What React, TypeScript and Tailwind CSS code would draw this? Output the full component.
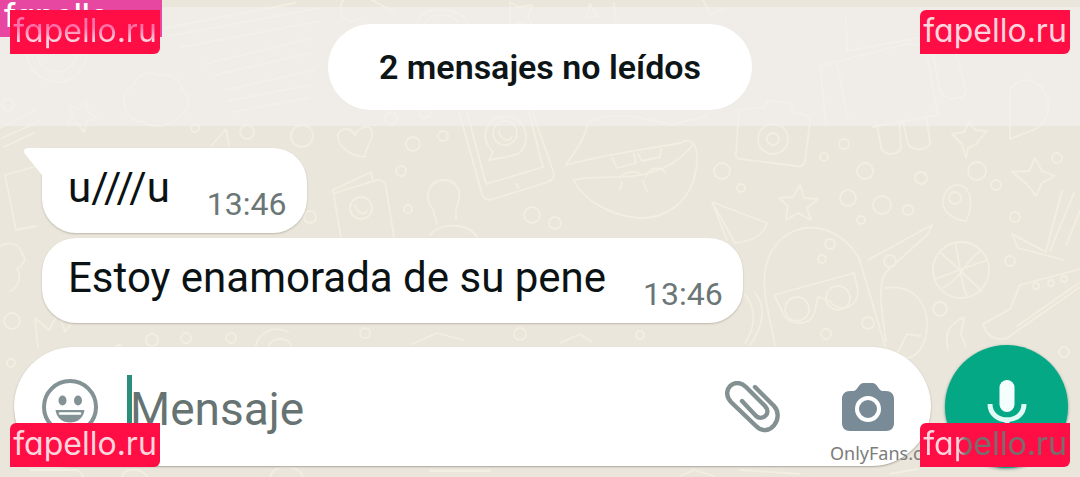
import React from "react";

function Wallpaper() {
  const dots = [
    [8, 105, 6], [247, 132, 7], [302, 136, 11], [195, 128, 4], [413, 144, 7], [443, 136, 5], [401, 171, 5],
    [408, 209, 4], [532, 215, 8], [555, 223, 6], [722, 171, 8], [741, 188, 4], [844, 144, 5], [824, 157, 4],
    [865, 171, 8], [921, 178, 6], [848, 198, 8], [882, 205, 9], [908, 210, 5], [861, 220, 4], [977, 171, 9],
    [996, 185, 5], [1057, 158, 5], [1015, 217, 5], [822, 259, 4], [830, 244, 5], [1010, 261, 5], [940, 309, 7],
    [868, 323, 6], [890, 261, 6], [1064, 352, 5], [826, 334, 5], [391, 118, 6], [425, 112, 6], [12, 321, 8],
    [119, 349, 4], [152, 340, 6], [186, 338, 5], [231, 338, 5], [365, 333, 5], [520, 334, 6], [640, 335, 4],
    [11, 363, 4], [310, 217, 6],
  ];
  return (
    <svg
      aria-hidden="true"
      className="absolute inset-0 h-full w-full"
      viewBox="0 0 1080 477"
      preserveAspectRatio="xMidYMid slice"
      fill="none"
      stroke="#f2eee1"
      strokeWidth="1.8"
      strokeLinecap="round"
      strokeLinejoin="round"
    >
      {dots.map(([x, y, r], i) => (
        <circle key={i} cx={x} cy={y} r={r} />
      ))}
      <path d="M165 28l130-25M170 36l150-28M182 47l138-26M205 64l104-25M215 75l95-22M226 90l88-20M228 101l82-16M232 112l76-14" />
      <circle cx="57" cy="52" r="30" /><circle cx="57" cy="52" r="20" />
      <path d="M124 102c-2-9 4-14 10-17 2-10 17-16 24-9 12-4 24 4 24 14 10 6 8 22-2 26-10 12-28 12-37 6-10 0-18-8-19-20zM69 105l9 4 8-9 2 12 9 5-10 4-3 11-7-9-10 1 6-9z" />
      <path d="M5 175l36-10M5 175l11 55 20-4M0 128l36-18M2 138l38-17M4 147l30-14M211 146l15-17 3 16M0 246c8-5 20-3 22 8 6 5 0 12-5 15 6 8 0 20-7 22M38 348l-3-30 14 12 10-18 6 20 8-10" />
      <path d="M343 0c-8 15 4 26 18 18M372 0l22 12M418 22c2-16 38-18 50 0M426 22c4-9 24-10 32 0M510 2l8 5 14-2-4 12 4 9-14-3-8 3zM590 4l8 12-12 2zM614 3l2 19M703 0l8 15 14-7" />
      <path d="M338 134c4-8 15-6 17 2 3-10 16-12 17-5 2 10-8 17-7 26-13-1-29-10-27-23zM333 190l38-18 2 9-38 12M333 190l8 48M335 193l42-13c6-1 8 2 9 7l8 51" />
      <circle cx="361" cy="208" r="11" /><path d="M355 205c2 8 9 11 12 6" />
      <path d="M433 210c-10-14-4-29 10-30 16 0 20 14 13 28v12M433 210l4 14M430 235c10-13 38-13 48 3" />
      <path d="M459 112l23 82c2 5 6 7 11 5l55-17c5-2 7-6 5-11l-23-66M467 112l19 72 57-17-15-58M489 160l4-8c-14-14-8-34 11-36 24 0 28 28 14 38l-12 3zM516 184l3 4" />
      <circle cx="505" cy="133" r="12" /><path d="M499 130c0 9 10 13 13 7" />
      <path d="M566 165c10-16 19-26 22-42 18-12 45-8 84 2 24-8 30-6 34-9M566 165c40-11 80-16 115-22 8-6 17 0 16 17-2 43-32 59-59 58-32-3-57-21-65-39M574 180c30-8 80 10 118-34M612 158l5 10 19-5-2-9M638 154l4 7 18-4 1-8M620 178c4-7 17-8 21-3M646 176c4-9 15-10 20-3M622 182l-2 8M643 181l4 10" />
      <path d="M739 110c8-2 19-2 25-2l4-7 22 2 3 10c9 0 18 3 17 9l-5 39c-1 5-4 6-8 5l-57-7c-3 0-5-3-4-6z" />
      <circle cx="773" cy="139" r="15" /><circle cx="773" cy="139" r="6" />
      <path d="M820 66l82-21c15-3 23 0 25 10l11 60-65 12M820 66l6 58M837 63l11 56M846 17l1 34 76-14M933 54l7 38c5 10 26 8 26-2l-10-38M877 124l4 23c2 10 20 9 20-1l-2-25M903 122l5 22c4 8 23 7 22-3l-4-25" />
      <path d="M1010 90c9-15 29-11 35 3 9 14 0 34-15 38l-20 8zM952 134l12-2 5-10 6 8 12 1-8 9-2 4-9 4-2 10-4-14zM1012 172l17-1 6-13 7 13 13 5-13 7-6 13-9-12z" />
      <path d="M800 185l4 13 14 1-11 9 4 12-13-7-12 7 2-14-9-8 14-1zM943 201c2-20 24-21 27-4 2 10-2 20-4 24-12-1-24-9-23-20z" />
      <circle cx="955" cy="198" r="6" />
      <path d="M712 202l55 21c-3 12-13 18-32 20zM712 202l15 38M1046 251l16-60M1050 251l24-58M1012 234l34 18M1012 234l6 14 46 12M1066 245l14-34" />
      <path d="M775 346c-4-30-22-70 0-100 22-28 62-24 84 12l26 88M774 295l80-22 4 18c1 15-18 24-28 10l-12-4-3 13c-2 17-29 18-34-1z" />
      <circle cx="797" cy="309" r="12" /><circle cx="838" cy="298" r="12" />
      <path d="M868 260l64-35-4 9-42 38c-9 13-4 43 0 69M885 288c24-4 39 10 42 31 2 26-14 48-30 35l10-20 14 2" />
      <circle cx="961" cy="270" r="28" /><path d="M935 279l52-19M940 252l42 39M955 243c5 16 4 37 12 53M980 251c-15 10-17 26-37 37" />
      <path d="M1020 285l60-16M1020 285l-10 24-27 15c4 13 12 17 24 14l73-51M1017 326l62-43M948 348c-4-16 2-24 16-31l-3 17 5 13M745 294c11 15 11 32 0 49M750 345c13-18 17-38 5-52" />
      <circle cx="1036" cy="286" r="3" /><circle cx="1051" cy="283" r="3" /><circle cx="1064" cy="279" r="3" />
      <path d="M255 347c4-15 18-22 33-15M268 347c4-12 22-10 24 0M412 344l25-11 26 7M560 343l20-9 12 8M30 470h48l6 7M122 477c3-10 18-10 26 0M270 477c4-14 28-14 33 0M430 471h60M680 476l14-6 20 6M740 470l60 4M890 474l28-5" />
    </svg>
  );
}

function Tag({ tone = "text-[#ffd5dd]", corners = "rounded-tl-md rounded-br-md" }: { tone?: string; corners?: string }) {
  return (
    <div className={`flex h-11 w-[150px] items-center justify-center bg-[#ff0d45] pb-0.5 ${corners}`}>
      <span className={`font-['Inter'] text-[32px] leading-[40px] whitespace-nowrap [font-feature-settings:'cv11'] ${tone}`}>
        fapello.ru
      </span>
    </div>
  );
}

function Bubble({ text, tail = false }: { text: string; tail?: boolean }) {
  return (
    <div className={`relative flex h-[85px] items-start rounded-[34px] bg-white pt-[10px] pr-5 pl-[26px] shadow-[0_1px_2px_#bdb8ad] ${tail ? "rounded-tl-none" : ""}`}>
      {tail && (
        <svg className="absolute top-0 -left-5 h-8 w-6" viewBox="0 0 24 32" aria-hidden="true">
          <path d="M24 0H6C2 0 1 3 3 6l17 21 4 5z" fill="#fff" />
        </svg>
      )}
      <p className="mr-[37px] text-[42px] leading-[60px] text-[#0b1214]">{text}</p>
      <time className="mt-[26px] shrink-0 text-[32px] leading-[40px] text-[#6b7677]">13:46</time>
    </div>
  );
}

function Smile() {
  return (
    <svg viewBox="0 0 56 56" className="size-14" fill="none" aria-hidden="true">
      <circle cx="28" cy="28" r="26" stroke="#839295" strokeWidth="4" />
      <ellipse cx="20.5" cy="21.5" rx="4" ry="5" fill="#839295" />
      <ellipse cx="36" cy="21.5" rx="4" ry="5" fill="#839295" />
      <path d="M13.500 31h29c-1 8-7 12.500-14.500 12.500S14.500 39 13.500 31z" fill="#839295" />
      <path d="M18 34.500h20" stroke="#fff" strokeWidth="2.5" strokeLinecap="round" />
    </svg>
  );
}

function Clip() {
  return (
    <svg viewBox="0 0 56 52" className="h-13 w-14" fill="none" stroke="#839192" strokeWidth="4.4" strokeLinecap="round" aria-hidden="true">
      <path d="M30 6L49 25C60 37 44 58 31 45L6 21C-5 9 10-5 21 6L40 25C47 33 37 40 31 35L17 20" />
    </svg>
  );
}

function Camera() {
  return (
    <svg viewBox="0 0 52 48" className="h-12 w-13" aria-hidden="true">
      <path d="M8 8h3c5 0 5-8 11-8h8c6 0 6 8 11 8h3c5 0 8 3 8 8v24c0 5-3 8-8 8H8c-5 0-8-3-8-8V16c0-5 3-8 8-8z" fill="#788b96" />
      <circle cx="26" cy="26" r="11" fill="none" stroke="#fff" strokeWidth="4" />
    </svg>
  );
}

function Mic() {
  return (
    <svg viewBox="0 0 40 56" className="h-14 w-10" fill="none" aria-hidden="true">
      <rect x="12.5" y="1" width="15" height="32" rx="7.5" fill="#f4fffd" />
      <path d="M3 25c0 21 34 21 34 0M20 41v11" stroke="#e0fbf5" strokeWidth="5" />
    </svg>
  );
}

export default function App() {
  return (
    <main className="relative isolate overflow-hidden bg-[#ebe6db] pt-[7px] pb-[9px] font-['Roboto',sans-serif]">
      <Wallpaper />

      <div className="relative flex h-[119px] items-center justify-center bg-[#f4f1f2]/60">
        <div className="rounded-full bg-white px-[51px] py-[22px] text-[34px] leading-[42px] font-semibold text-[#0d1517]">
          2 mensajes no leídos
        </div>
      </div>

      <section className="relative flex flex-col items-start gap-[5px] pt-[22px] pl-[42px]" aria-label="Mensajes">
        <Bubble text="u////u" tail />
        <Bubble text="Estoy enamorada de su pene" />
      </section>

      <form className="relative mt-[22px] flex items-center gap-3.5 pr-3 pl-3.5" onSubmit={(e) => e.preventDefault()}>
        <div className="flex h-[119px] min-w-0 flex-1 items-center rounded-full bg-white pr-[37px] pl-7 shadow-[0_1px_2px_#aaa59c]">
          <button type="button" aria-label="Emojis"><Smile /></button>
          <span className="ml-[29px] h-16 w-[5px] shrink-0 bg-[#2c8d7d]" aria-hidden="true" />
          <input
            aria-label="Mensaje"
            placeholder="Mensaje"
            className="-ml-0.5 h-[70px] min-w-0 flex-1 bg-transparent pt-1 text-[46px] leading-[54px] text-[#0b1214] outline-none placeholder:text-[#667372] placeholder:opacity-100"
          />
          <button type="button" aria-label="Adjuntar"><Clip /></button>
          <button type="button" aria-label="Cámara" className="ml-[61px]"><Camera /></button>
        </div>
        <button type="button" aria-label="Grabar audio" className="flex size-[123px] shrink-0 items-center justify-center rounded-full bg-[#05a884] shadow-[0_1px_3px_#68918a]">
          <Mic />
        </button>
      </form>

      <div className="absolute top-0 left-0 h-[37px] w-[162px] overflow-hidden bg-[#e747a0] pl-1 font-['Inter'] text-[32px] leading-[32px] font-medium text-white [font-feature-settings:'cv11']">
        fapello
      </div>
      <div className="absolute top-2.5 left-2.5">
        <Tag corners="rounded-br-md" tone="bg-linear-to-b from-[#ff6fa8] from-40% to-[#ffd5e2] to-75% bg-clip-text text-transparent" />
      </div>
      <div className="absolute top-2.5 right-2.5"><Tag /></div>
      <div className="absolute right-[19px] bottom-3 w-[231px] font-['Noto_Sans'] text-[18px] leading-6 text-[#7c7c7b]">OnlyFans.c</div>
      <div className="absolute bottom-2.5 left-2.5"><Tag /></div>
      <div className="absolute right-2.5 bottom-2.5">
        <Tag tone="bg-linear-to-r from-[#ffd5dd] from-24% via-[#75706f] via-30% to-[#75706f] to-90% bg-clip-text text-transparent" />
      </div>
    </main>
  );
}
